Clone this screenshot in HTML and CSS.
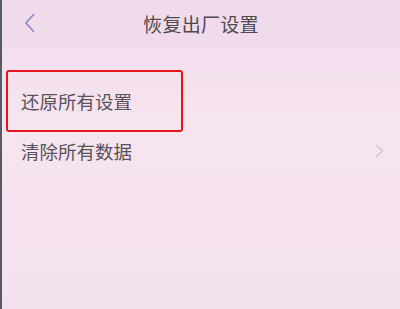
FILE: index.html
```html
<html lang="zh">

<head>
    <title>恢复出厂设置</title>
    <link rel="stylesheet" href="styles.css">
</head>

<body>
    <div class="screen">
        <div class="topbar">
            <svg class="back" width="12" height="20" viewBox="0 0 12 20">
                <path d="M10 1 L2 10 L10 19" fill="none" stroke="#8c87c9" stroke-width="1.6" />
            </svg>
            <span class="title">恢复出厂设置</span>
        </div>

        <div class="list">
            <div class="row">
                <span class="label">还原所有设置</span>
                <div class="mark"></div>
            </div>
            <div class="row">
                <span class="label">清除所有数据</span>
                <svg class="arrow" width="9" height="14" viewBox="0 0 9 14">
                    <path d="M1 1 L7.5 7 L1 13" fill="none" stroke="#d2c4cf" stroke-width="1.5" />
                </svg>
            </div>
        </div>
    </div>
</body>
</html>
```

FILE: styles.css
```css
html,
body {
    padding: 0;
    margin: 0;
}

* {
    box-sizing: border-box;
}

body {
    font-family: "Noto Sans CJK SC", "Noto Sans", sans-serif;
    background-color: #f5e3ef;
}

.screen {
    width: 400px;
    height: 309px;
    border-left: 2px solid #5c5862;
    background: linear-gradient(#f1dcec, #f6e4ef 40%, #f4e1ee);
}

.topbar {
    position: relative;
    height: 47px;
    display: flex;
    align-items: center;
    justify-content: center;
    background-color: #f0dbeb;
}

.back {
    position: absolute;
    left: 22px;
    top: 13px;
}

.title {
    font-size: 19px;
    color: #4f4a50;
    letter-spacing: 0.3px;
}

.list {
    padding-top: 29px;
}

.row {
    position: relative;
    height: 50px;
    display: flex;
    align-items: center;
    justify-content: space-between;
    padding: 0 16px 0 19px;
    font-size: 18.5px;
    color: #58535a;
}

.mark {
    position: absolute;
    left: 4px;
    top: -6px;
    width: 177px;
    height: 62px;
    border: 2px solid #e4161b;
    border-radius: 3px;
}
```
